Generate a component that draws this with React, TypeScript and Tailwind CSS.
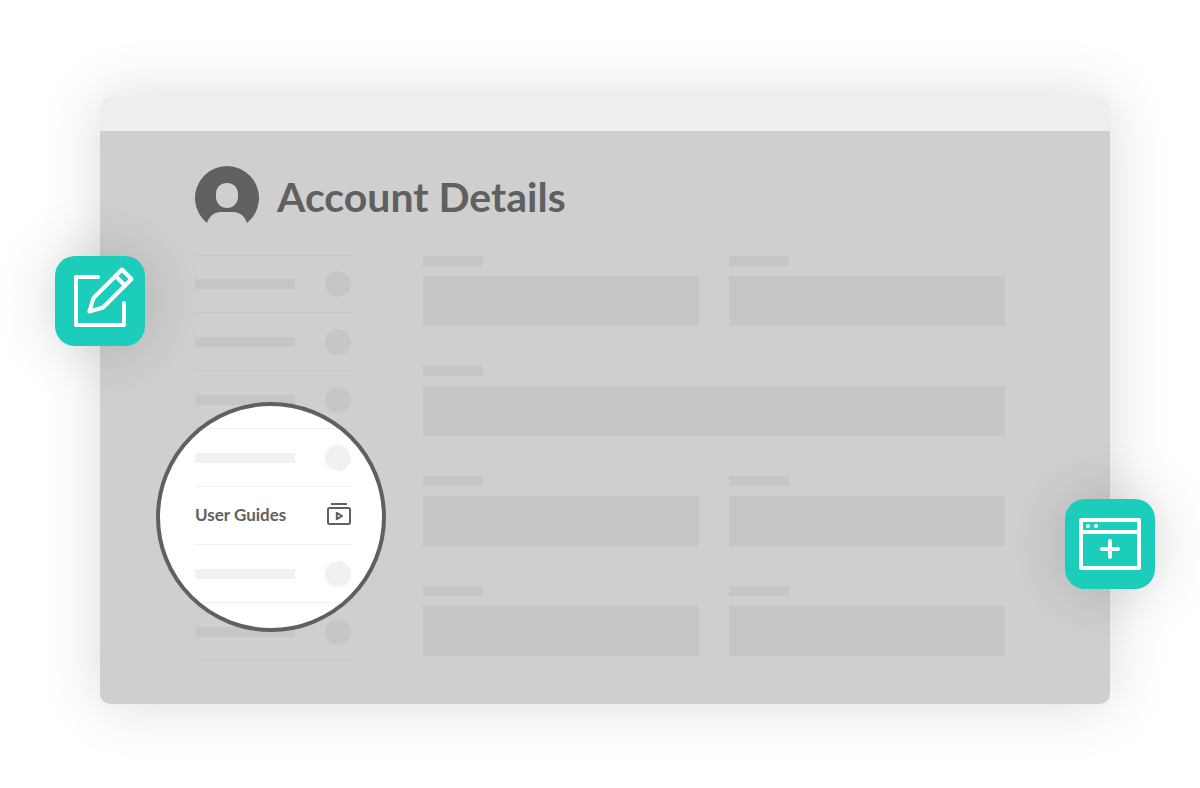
import React from 'react';

interface MenuRowProps {
    barClass: string;
    lineClass: string;
    children?: React.ReactNode;
}

// One line of the side menu: a placeholder bar and dot unless content is given
const MenuRow: React.FC<MenuRowProps> = ({ barClass, lineClass, children }) => (
    <li className={`flex items-center justify-between border-b pt-4 pr-px pb-[15px] ${lineClass}`}>
        {children ?? (
            <>
                <div className={`h-2.5 w-[100px] ${barClass}`} />
                <div className={`size-[26px] rounded-full ${barClass}`} />
            </>
        )}
    </li>
);

const Field: React.FC<{ wide?: boolean }> = ({ wide }) => (
    <div className={wide ? 'col-span-2' : ''}>
        <div className="h-2.5 w-[60px] bg-[#c6c6c6]" />
        <div className="mt-2.5 h-[50px] bg-[#c6c6c6]" />
    </div>
);

const AvatarIcon = () => (
    <svg className="size-16 shrink-0" viewBox="0 0 64 64" fill="#606060" aria-hidden="true">
        <path
            fillRule="evenodd"
            d="M12 57A32 32 0 1 1 52 57C50 51 46 46 38 46H26C18 46 14 51 12 57ZM32 17C25.5 17 21 21.5 21 28V31C21 37.5 26 42 32 42S43 37.5 43 31V28C43 21.5 38.5 17 32 17Z"
        />
    </svg>
);

const VideoIcon = () => (
    <svg className="h-[26px] w-6" viewBox="0 0 24 26" fill="none" stroke="#606060" strokeWidth="2" aria-hidden="true">
        <path d="M4 1H20" />
        <rect x="1" y="5" width="22" height="16" rx="1.5" />
        <path d="M9.8 9.8V16.2L15 13Z" strokeLinejoin="round" />
    </svg>
);

const EditIcon = () => (
    <svg className="size-full" viewBox="0 0 90 90" fill="none" stroke="#fff" strokeWidth="4" strokeLinecap="round" strokeLinejoin="round" aria-hidden="true">
        <path d="M43 21H21V69H69V47" />
        <path d="M67 13.5L38.5 42L34.3 55.7L48 51.5L76.5 23Z" />
        <path d="M60.5 20L70 29.5" />
    </svg>
);

const WindowIcon = () => (
    <svg className="size-full" viewBox="0 0 90 90" fill="none" stroke="#fff" strokeWidth="4" strokeLinecap="round" strokeLinejoin="round" aria-hidden="true">
        <path d="M16 21H74V69H16ZM16 33H74" />
        <path d="M37 50H53M45 42V58" />
        <circle cx="23" cy="27" r="2" fill="#fff" stroke="none" />
        <circle cx="31" cy="27" r="2" fill="#fff" stroke="none" />
    </svg>
);

const App: React.FC = () => {
    return (
        <main className="bg-white pt-[97px] pr-[90px] pb-[84px] pl-[100px] font-['Lato',sans-serif] text-[#606060]">
            <div className="relative rounded-[10px] shadow-[0_0_60px_rgba(0,0,0,0.15)]">
                <div className="h-[34px] rounded-t-[10px] bg-[#eeeeee]" />

                <div className="rounded-b-[10px] bg-[#cfcfcf] pt-[35px] pr-[105px] pb-[43px] pl-[95px]">
                    <header className="flex items-start gap-[18px]">
                        <AvatarIcon />
                        <h1 className="text-[41px] leading-[62px] font-bold">Account Details</h1>
                    </header>

                    <div className="mt-[25px] flex items-start gap-[71px]">
                        <nav className="relative w-[157px] shrink-0">
                            <ul className="border-t border-[#c6c6c6] *:first:pt-[15px]">
                                {Array.from({ length: 7 }, (_, i) => (
                                    <MenuRow key={i} barClass="bg-[#c6c6c6]" lineClass="border-[#c6c6c6]" />
                                ))}
                            </ul>

                            {/* Magnifier over the highlighted entry */}
                            <div className="absolute top-[147px] -left-[39px] size-[230px] overflow-hidden rounded-full border-4 border-[#606060] bg-white pt-[22px] pl-[35px]">
                                <ul className="w-[157px] border-t border-[#f1f1f1]">
                                    <MenuRow barClass="bg-[#f1f1f1]" lineClass="border-[#f1f1f1]" />
                                    <MenuRow barClass="bg-[#f1f1f1]" lineClass="border-[#f1f1f1]">
                                        <a href="#user-guides" className="flex w-full items-start justify-between text-[17px] leading-6 font-bold">
                                            User Guides
                                            <VideoIcon />
                                        </a>
                                    </MenuRow>
                                    <MenuRow barClass="bg-[#f1f1f1]" lineClass="border-[#f1f1f1]" />
                                </ul>
                            </div>
                        </nav>

                        <section className="grid flex-1 grid-cols-2 gap-x-[30px] gap-y-10 pt-px">
                            <Field />
                            <Field />
                            <Field wide />
                            <Field />
                            <Field />
                            <Field />
                            <Field />
                        </section>
                    </div>
                </div>

                <button type="button" aria-label="Edit" className="absolute top-[159px] -left-[45px] size-[90px] rounded-[20px] bg-[#1ccdbc] shadow-[0_0_60px_rgba(0,0,0,0.17)]">
                    <EditIcon />
                </button>
                <button type="button" aria-label="Add window" className="absolute top-[402px] -right-[45px] size-[90px] rounded-[20px] bg-[#1ccdbc] shadow-[0_0_60px_rgba(0,0,0,0.17)]">
                    <WindowIcon />
                </button>
            </div>
        </main>
    );
};

export default App;
